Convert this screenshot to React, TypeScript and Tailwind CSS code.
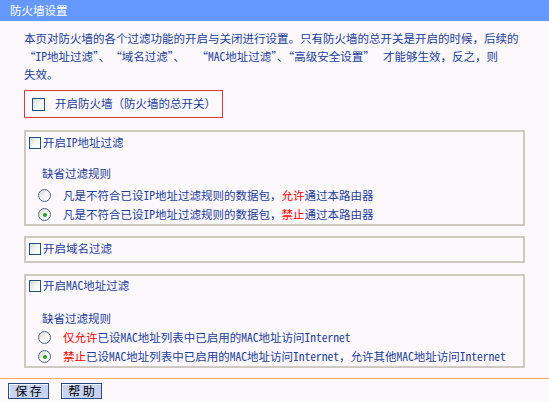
import React from "react";

const L = ({ children }: { children: React.ReactNode }) => (
  <span className="[font-feature-settings:'hwid']">{children}</span>
);

const R = ({ children }: { children: React.ReactNode }) => (
  <span className="text-[#ff0000]">{children}</span>
);

const Checkbox = () => (
  <span className="inline-block w-[12px] h-[12px] shrink-0 border border-[#1c5180] bg-gradient-to-br from-[#d8d8d0] via-[#f4f4f0] to-white" />
);

const Radio = ({ checked }: { checked?: boolean }) => (
  <span className="relative flex items-center justify-center w-[13px] h-[13px] shrink-0 rounded-full border border-[#4a6284] bg-gradient-to-br from-[#d8d8d2] via-[#f4f4f0] to-white">
    {checked && <span className="w-[4px] h-[4px] rounded-full bg-[#21a321]" />}
  </span>
);

const RadioRow = ({ checked, children }: { checked?: boolean; children: React.ReactNode }) => (
  <div className="flex items-center h-[19px] pl-[12px]">
    <Radio checked={checked} />
    <span className="ml-[12px] whitespace-pre">{children}</span>
  </div>
);

const CheckRow = ({ children, pt }: { children: React.ReactNode; pt: string }) => (
  <div className={`flex items-center h-[18px] pl-[3px] ${pt}`}>
    <Checkbox />
    <span className="ml-[2px]">{children}</span>
  </div>
);

export default function App() {
  return (
    <div
      lang="zh-CN"
      className="w-[549px] h-[402px] overflow-hidden bg-[#fcf8fc] text-[#1d3d9b] text-[11.5px] font-['Noto_Sans_CJK_SC',sans-serif]"
    >
      <div className="h-[21px] bg-[#6699ff] pl-[10px] flex items-center text-white text-[11.5px]">
        防火墙设置
      </div>
      <div className="px-[24px]">
        <div className="mt-[8px] leading-[18px] whitespace-pre">
          <div>本页对防火墙的各个过滤功能的开启与关闭进行设置。只有防火墙的总开关是开启的时候，后续的</div>
          <div>
            “<L>IP</L>地址过滤”、　“域名过滤”、　　“<L>MAC</L>地址过滤”、“高级安全设置”　 才能够生效，反之，则
          </div>
          <div>失效。</div>
        </div>

        <div className="mt-[7px] w-[199px] h-[28px] border border-[#e03a3a] flex items-center pl-[7px]">
          <span className="inline-block w-[13px] h-[13px] shrink-0 border border-[#1c5180] bg-gradient-to-br from-[#d8d8d0] via-[#f4f4f0] to-white" />
          <span className="ml-[10px]">开启防火墙（防火墙的总开关）</span>
        </div>

        <div className="mt-[12px] w-[501px] border-2 border-[#d0c9c1]">
          <CheckRow pt="mt-[2px]">
            开启<L>IP</L>地址过滤
          </CheckRow>
          <div className="mt-[13px] h-[18px] flex items-center pl-[16px]">缺省过滤规则</div>
          <div className="mt-[3px]">
            <RadioRow>
              凡是不符合已设<L>IP</L>地址过滤规则的数据包，<R>允许</R>通过本路由器
            </RadioRow>
            <RadioRow checked>
              凡是不符合已设<L>IP</L>地址过滤规则的数据包，<R>禁止</R>通过本路由器
            </RadioRow>
          </div>
        </div>

        <div className="mt-[10px] w-[501px] border-2 border-[#d0c9c1] pb-[3px]">
          <CheckRow pt="mt-[2px]">开启域名过滤</CheckRow>
        </div>

        <div className="mt-[11px] w-[501px] border-2 border-[#d0c9c1]">
          <CheckRow pt="mt-[1px]">
            开启<L>MAC</L>地址过滤
          </CheckRow>
          <div className="mt-[15px] h-[18px] flex items-center pl-[16px]">缺省过滤规则</div>
          <div>
            <RadioRow>
              <R>仅允许</R>已设<L>MAC</L>地址列表中已启用的<L>MAC</L>地址访问<L>Internet</L>
            </RadioRow>
            <RadioRow checked>
              <R>禁止</R>已设<L>MAC</L>地址列表中已启用的<L>MAC</L>地址访问<L>Internet</L>，允许其他<L>MAC</L>地址访问<L>Internet</L>
            </RadioRow>
          </div>
        </div>
      </div>

      <div className="mt-[10px] h-[1px] bg-[#ffa860]" />

      <div className="mt-[4px] pl-[8px] flex gap-[12px]">
        <button className="w-[41px] h-[16px] flex items-center justify-center border border-[#2e4a86] bg-[#c6d3f1] text-black text-[12px] leading-none shadow-[inset_1px_1px_0_#eef2fc]">
          保 存
        </button>
        <button className="w-[41px] h-[16px] flex items-center justify-center border border-[#2e4a86] bg-[#c6d3f1] text-black text-[12px] leading-none shadow-[inset_1px_1px_0_#eef2fc]">
          帮 助
        </button>
      </div>
    </div>
  );
}
